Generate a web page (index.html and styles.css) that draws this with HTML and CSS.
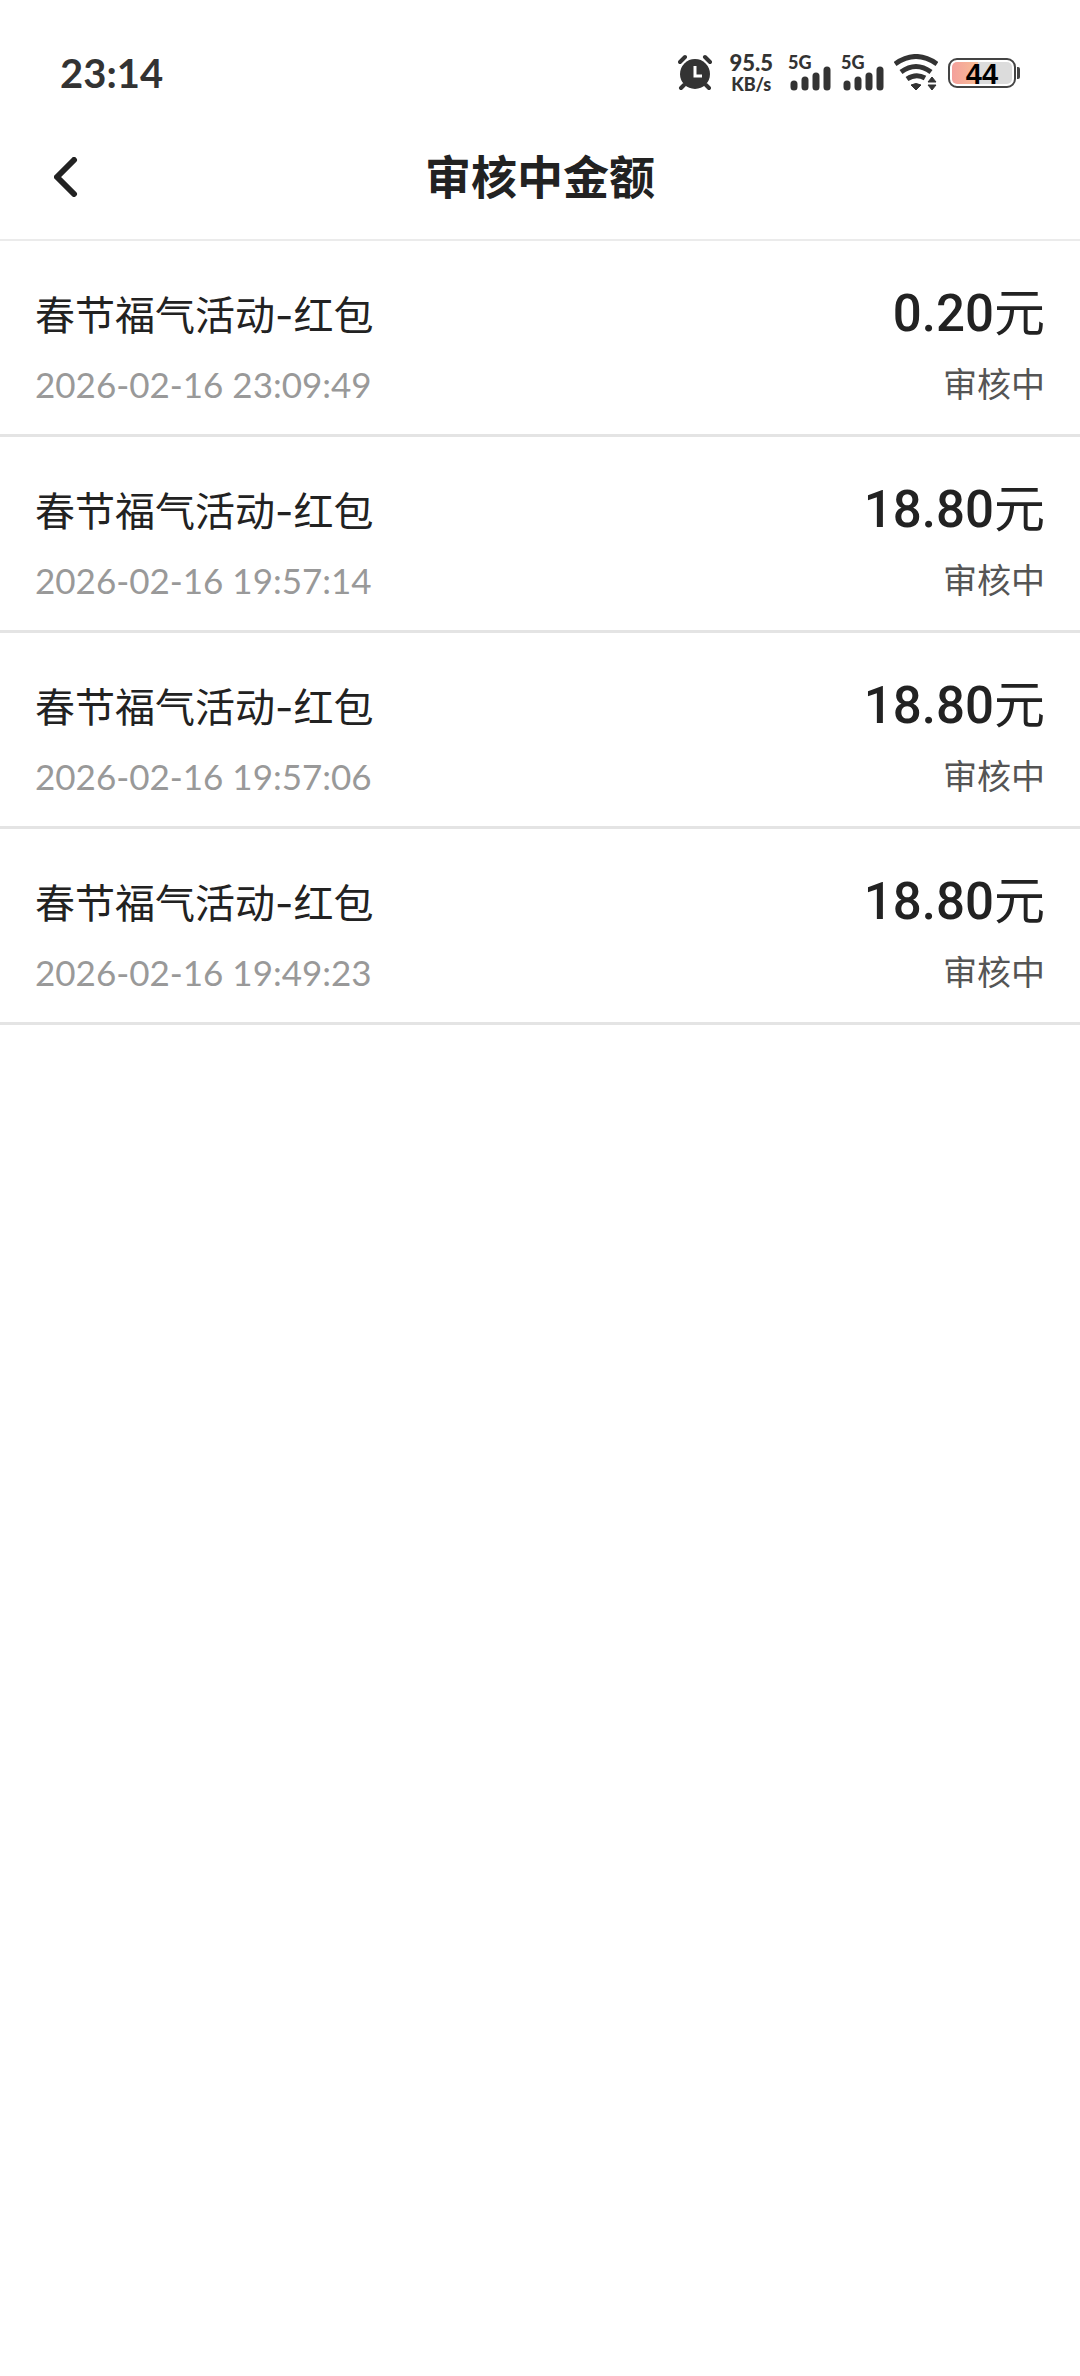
FILE: index.html
```html
<!DOCTYPE html>
<html lang="zh-CN">
<head>
    <meta charset="UTF-8">
    <meta name="viewport" content="width=device-width, initial-scale=1.0">
    <title>审核中金额</title>
    <link rel="stylesheet" href="styles.css">
</head>
<body>
    <div class="status-bar">
        <span class="clock">23:14</span>
        <div class="status-icons">
            <svg class="alarm" width="36" height="38" viewBox="0 0 36 38">
                <circle cx="17" cy="20" r="15" fill="#333"/>
                <path d="M2 8L7 3M32 8L27 3M6 31L3 34M28 31L31 34" stroke="#333" stroke-width="4" stroke-linecap="round"/>
                <path d="M17 12V22H24" fill="none" stroke="#fff" stroke-width="3"/>
            </svg>
            <div class="net-speed">
                <span class="net-value">95.5</span>
                <span class="net-unit">KB/s</span>
            </div>
            <svg class="signal" width="43" height="50" viewBox="0 -6 43 50">
                <text class="signal-text" x="0" y="15">5G</text>
                <path d="M6 30V33M17 26V33M28 22V33M39 16V33" stroke="#333" stroke-width="7" stroke-linecap="round"/>
            </svg>
            <svg class="signal" width="43" height="50" viewBox="0 -6 43 50">
                <text class="signal-text" x="0" y="15">5G</text>
                <path d="M6 30V33M17 26V33M28 22V33M39 16V33" stroke="#333" stroke-width="7" stroke-linecap="round"/>
            </svg>
            <svg class="wifi" width="44" height="38" viewBox="0 0 44 38">
                <path d="M1 10Q22 -5 43 10M7 18Q22 7 37 18M13 25Q22 19 31 24" fill="none" stroke="#333" stroke-width="5"/>
                <path d="M17 31Q22 28 27 31L22 36Z" fill="#333" stroke="#333" stroke-linejoin="round"/>
                <path d="M34 28L38 23L42 28ZM34 31L38 36L42 31Z" fill="#333" stroke="#333" stroke-linejoin="round"/>
            </svg>
            <div class="battery">
                <span class="battery-body">44</span>
                <span class="battery-cap"></span>
            </div>
        </div>
    </div>

    <header class="nav-bar">
        <button class="back-button" type="button" aria-label="返回">
            <svg width="24" height="40" viewBox="0 0 24 40">
                <path d="M20 3L3 20L20 37" fill="none" stroke="#222" stroke-width="6" stroke-linecap="round" stroke-linejoin="round"/>
            </svg>
        </button>
        <h1 class="nav-title">审核中金额</h1>
    </header>

    <main>
        <ul class="record-list">
            <li class="record">
                <div class="record-info">
                    <span class="record-name">春节福气活动-红包</span>
                    <time class="record-time">2026-02-16 23:09:49</time>
                </div>
                <div class="record-side">
                    <span class="record-amount">0.20<span class="unit">元</span></span>
                    <span class="record-status">审核中</span>
                </div>
            </li>
            <li class="record">
                <div class="record-info">
                    <span class="record-name">春节福气活动-红包</span>
                    <time class="record-time">2026-02-16 19:57:14</time>
                </div>
                <div class="record-side">
                    <span class="record-amount">18.80<span class="unit">元</span></span>
                    <span class="record-status">审核中</span>
                </div>
            </li>
            <li class="record">
                <div class="record-info">
                    <span class="record-name">春节福气活动-红包</span>
                    <time class="record-time">2026-02-16 19:57:06</time>
                </div>
                <div class="record-side">
                    <span class="record-amount">18.80<span class="unit">元</span></span>
                    <span class="record-status">审核中</span>
                </div>
            </li>
            <li class="record">
                <div class="record-info">
                    <span class="record-name">春节福气活动-红包</span>
                    <time class="record-time">2026-02-16 19:49:23</time>
                </div>
                <div class="record-side">
                    <span class="record-amount">18.80<span class="unit">元</span></span>
                    <span class="record-status">审核中</span>
                </div>
            </li>
        </ul>
    </main>
</body>
</html>
```
FILE: styles.css
```css
* {
    box-sizing: border-box;
}

body {
    margin: 0;
    background: #fff;
    color: #222;
    font-family: Lato, "Noto Sans CJK SC", sans-serif;
}

/* Status bar */
.status-bar {
    display: flex;
    align-items: center;
    justify-content: space-between;
    padding: 48px 60px 12px;
    color: #333;
}

.clock {
    font-size: 40px;
    line-height: 50px;
    font-weight: 700;
}

.status-icons {
    display: flex;
    align-items: center;
    gap: 10px;
}

.net-speed {
    display: flex;
    flex-direction: column;
    align-items: center;
    margin: 0 5px;
    font-weight: 900;
}

.net-value {
    font-size: 22px;
    line-height: 22px;
}

.net-unit {
    font-size: 18px;
    line-height: 20px;
}

.signal-text {
    font-size: 18px;
    font-weight: 900;
    fill: #333;
}

.battery {
    display: flex;
    align-items: center;
    gap: 1px;
}

.battery-body {
    width: 68px;
    height: 30px;
    padding: 2px;
    border: 2px solid #444;
    border-radius: 9px;
    background: linear-gradient(90deg, #f4a09c, #f7bd96 44%, #dcdcdc 44%) content-box;
    color: #000;
    font-family: "Liberation Sans", sans-serif;
    font-size: 29px;
    line-height: 24px;
    font-weight: 700;
    text-align: center;
}

.battery-cap {
    width: 3px;
    height: 12px;
    border-radius: 0 2px 2px 0;
    background: #444;
}

/* Navigation bar */
.nav-bar {
    display: grid;
    grid-template-columns: 64px 1fr 64px;
    align-items: center;
    height: 131px;
    padding: 4px 34px 0;
    border-bottom: 2px solid #ebebeb;
}

.back-button {
    display: flex;
    justify-content: center;
    width: 64px;
    padding: 12px 0;
    border: none;
    background: none;
    cursor: pointer;
}

.nav-title {
    margin: 0;
    font-size: 46px;
    line-height: 60px;
    font-weight: 700;
    text-align: center;
}

/* Record list */
.record-list {
    margin: 0;
    padding: 0;
    list-style: none;
}

.record {
    display: flex;
    justify-content: space-between;
    padding: 40px 35px 25px;
    border-bottom: 3px solid #e4e4e4;
}

.record-info,
.record-side {
    display: flex;
    flex-direction: column;
    justify-content: space-between;
    gap: 8px;
}

.record-side {
    align-items: flex-end;
}

.record-name {
    font-family: Inter, "Noto Sans CJK SC", sans-serif;
    font-size: 40px;
    line-height: 70px;
}

.record-time,
.record-status {
    line-height: 50px;
}

.record-time {
    color: #999;
    font-size: 35px;
}

.record-amount {
    font-family: Roboto, "Noto Sans CJK SC", sans-serif;
    font-size: 51px;
    line-height: 66px;
    font-weight: 500;
}

.unit {
    font-weight: 400;
}

.record-status {
    color: #555;
    font-size: 34px;
}
```
